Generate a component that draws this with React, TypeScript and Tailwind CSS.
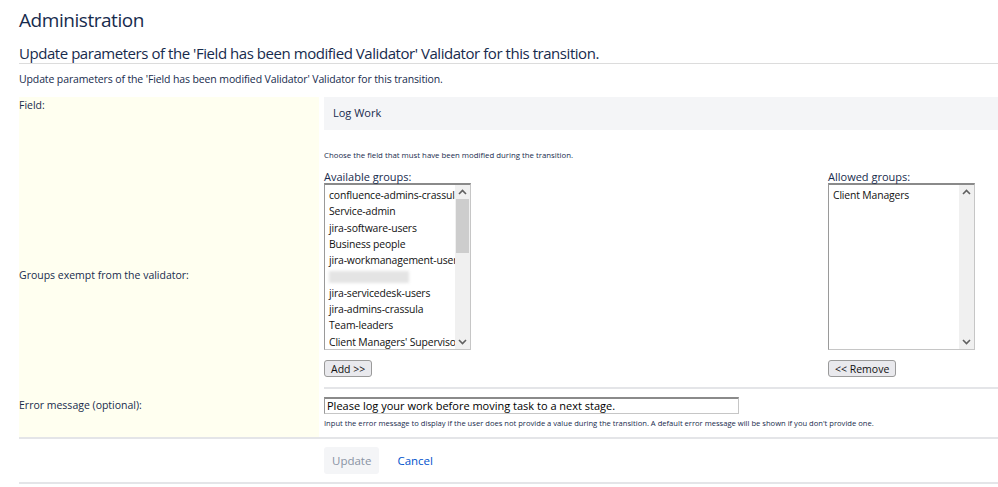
import React from "react";

const available = [
  "confluence-admins-crassula",
  "Service-admin",
  "jira-software-users",
  "Business people",
  "jira-workmanagement-users",
  "",
  "jira-servicedesk-users",
  "jira-admins-crassula",
  "Team-leaders",
  "Client Managers' Supervisors",
];

function Chevron({ up }: { up?: boolean }) {
  return (
    <svg width="9" height="6" viewBox="0 0 9 6" className="text-[#606060]">
      <polyline
        points={up ? "1,5 4.5,1.5 8,5" : "1,1 4.5,4.5 8,1"}
        fill="none"
        stroke="currentColor"
        strokeWidth="1.6"
      />
    </svg>
  );
}

function ScrollBar({ thumb }: { thumb?: boolean }) {
  return (
    <div className="flex w-[15px] shrink-0 flex-col bg-[#f0f0f0]">
      <div className="flex h-[14px] items-center justify-center">
        <Chevron up />
      </div>
      <div className="flex-1">
        {thumb && <div className="mx-[1px] h-[54px] bg-[#cdcdcd]" />}
      </div>
      <div className="flex h-[14px] items-center justify-center">
        <Chevron />
      </div>
    </div>
  );
}

function ListBox({ items, thumb }: { items: string[]; thumb?: boolean }) {
  return (
    <div className="flex h-[167px] w-[147px] border border-[#c6c6c6] border-t-2 border-t-[#8a8a8a] border-l-[#9a9a9a] bg-white">
      <div className="flex-1 overflow-hidden pl-[4px] pt-[2px]">
        {items.map((g, i) =>
          g ? (
            <div
              key={i}
              className="h-[16.3px] whitespace-nowrap text-[10.4px] leading-[16px] tracking-[-0.15px] text-[#111]"
            >
              {g}
            </div>
          ) : (
            <div key={i} className="flex h-[16.3px] items-center">
              <div className="h-[12px] w-[80px] bg-[#e4e4e4] blur-[1.5px]" />
            </div>
          ),
        )}
      </div>
      <ScrollBar thumb={thumb} />
    </div>
  );
}

function SmallButton({ children }: { children: React.ReactNode }) {
  return (
    <button className="h-[17px] rounded-[3px] border border-[#9a9a9a] bg-[#e9e9ed] px-[6px] text-[10.5px] leading-[14px] text-[#111]">
      {children}
    </button>
  );
}

export default function App() {
  return (
    <div className="h-[487px] w-[998px] overflow-hidden bg-white pl-[19px] font-['Open_Sans',sans-serif] text-[#172b4d]">
      <h1 className="pt-[7px] text-[19px] leading-[26px] tracking-[-0.45px]">Administration</h1>
      <h2 className="mt-[10px] border-b border-[#dcdcdc] text-[15px] leading-[20px] tracking-[-0.45px]">
        Update parameters of the 'Field has been modified Validator' Validator for this transition.
      </h2>
      <p className="mt-[8px] text-[10.5px] leading-[14px] tracking-[-0.12px]">
        Update parameters of the 'Field has been modified Validator' Validator for this transition.
      </p>

      <div className="mt-[11px]">
        {/* Field */}
        <div className="flex">
          <div className="w-[300px] shrink-0 bg-[#fffff0] pt-[1px] text-[10.5px] leading-[14px]">
            Field:
          </div>
          <div className="flex-1 pl-[5px]">
            <div className="flex h-[33px] items-center bg-[#f4f5f7] pl-[9px] text-[11px]">
              Log Work
            </div>
            <div className="mt-[20px] h-[12px] text-[7.8px] leading-[10px]">
              Choose the field that must have been modified during the transition.
            </div>
          </div>
        </div>

        {/* Groups */}
        <div className="flex">
          <div className="flex w-[300px] shrink-0 items-center bg-[#fffff0] text-[10.5px] leading-[14px]">
            Groups exempt from the validator:
          </div>
          <div className="flex-1 pl-[5px]">
            <div className="flex w-[651px] justify-between pt-[9px]">
              <div>
                <div className="h-[12px] text-[11px] leading-[12px]">Available groups:</div>
                <ListBox items={available} thumb />
                <div className="mt-[10px] flex">
                  <SmallButton>Add &gt;&gt;</SmallButton>
                </div>
              </div>
              <div>
                <div className="h-[12px] text-[11px] leading-[12px]">Allowed groups:</div>
                <ListBox items={["Client Managers"]} />
                <div className="mt-[10px] flex">
                  <SmallButton>&lt;&lt; Remove</SmallButton>
                </div>
              </div>
            </div>
            <div className="h-[10px]" />
          </div>
        </div>

        {/* Error message */}
        <div className="flex">
          <div className="w-[300px] shrink-0 bg-[#fffff0] pt-[11px] text-[10.5px] leading-[14px]">
            Error message (optional):
          </div>
          <div className="flex-1 pl-[5px]">
            <div className="border-t-2 border-[#e4e5e8] pt-[8px] pb-[9px]">
              <div className="flex h-[17px] w-[415px] items-center border border-[#c6c6c6] border-t-2 border-t-[#8a8a8a] border-l-[#9a9a9a] pl-[2px] text-[11px] text-black">
                Please log your work before moving task to a next stage.
              </div>
              <div className="mt-[4px] h-[10px] text-[7.6px] leading-[10px]">
                Input the error message to display if the user does not provide a value during the transition. A default error message will be shown if you don't provide one.
              </div>
            </div>
          </div>
        </div>

        {/* Buttons */}
        <div className="flex border-y-2 border-[#e4e5e8] pt-[8px] pb-[8px]">
          <div className="w-[300px] shrink-0" />
          <div className="flex items-center gap-[18px] pl-[5px]">
            <button className="h-[27px] rounded-[3px] bg-[#f4f5f7] px-[8px] text-[11.5px] text-[#8993a4]">
              Update
            </button>
            <span className="text-[11.5px] text-[#0052cc]">Cancel</span>
          </div>
        </div>
      </div>
    </div>
  );
}
